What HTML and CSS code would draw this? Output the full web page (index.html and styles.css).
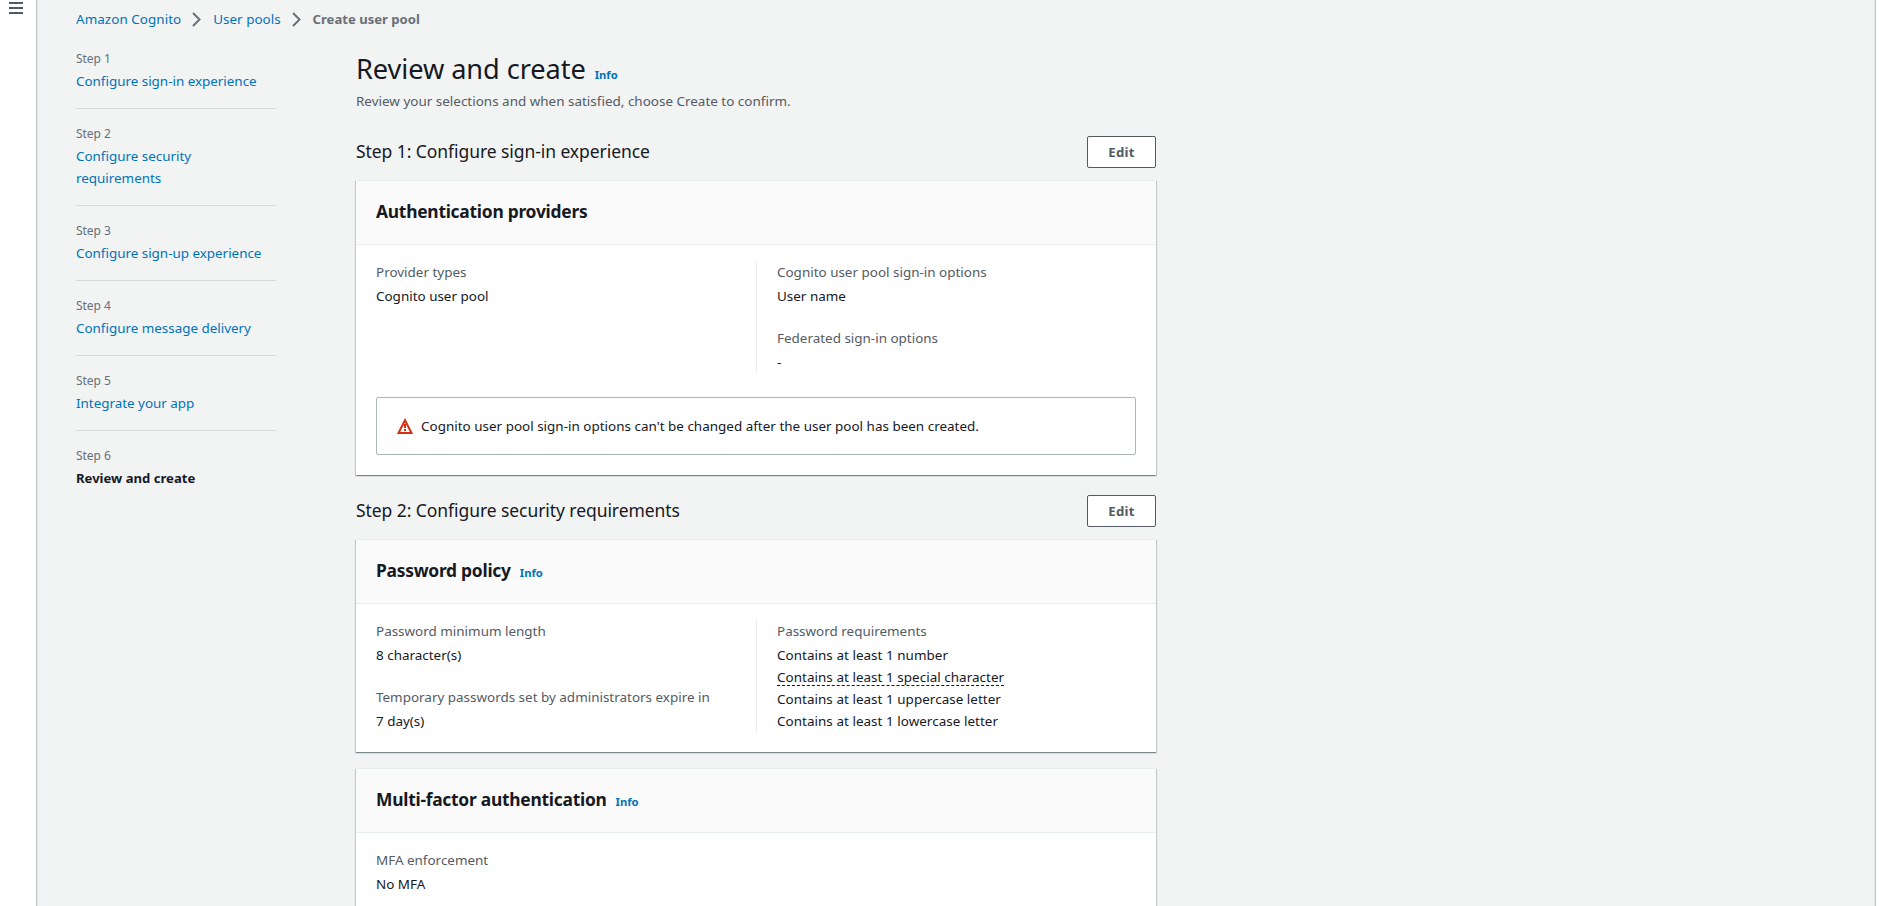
FILE: index.html
```html
<!DOCTYPE html>
<html lang="en">
<head>
<meta charset="utf-8">
<title>Create user pool</title>
<link rel="stylesheet" href="styles.css">
</head>
<body>
<div class="app">
  <aside class="rail">
    <svg class="menu" width="14" height="12" viewBox="0 0 14 12" fill="none" stroke="#545b64" stroke-width="2"><path d="M0 1h14M0 6h14M0 11h14"/></svg>
  </aside>
  <main class="main">
    <nav class="crumbs">
      <a class="crumb">Amazon Cognito</a>
      <svg class="chevron" width="9" height="15" viewBox="0 0 9 15" fill="none" stroke="#687078" stroke-width="2"><path d="M1 1l6.5 6.5L1 14"/></svg>
      <a class="crumb crumb-short">User pools</a>
      <svg class="chevron" width="9" height="15" viewBox="0 0 9 15" fill="none" stroke="#687078" stroke-width="2"><path d="M1 1l6.5 6.5L1 14"/></svg>
      <span class="crumb-current">Create user pool</span>
    </nav>
    <div class="columns">
      <ol class="steps">
        <li class="step"><small>Step 1</small><a>Configure sign-in experience</a></li>
        <li class="step"><small>Step 2</small><a>Configure security requirements</a></li>
        <li class="step"><small>Step 3</small><a>Configure sign-up experience</a></li>
        <li class="step"><small>Step 4</small><a>Configure message delivery</a></li>
        <li class="step"><small>Step 5</small><a>Integrate your app</a></li>
        <li class="step"><small>Step 6</small><b>Review and create</b></li>
      </ol>
      <div class="content">
        <h1>Review and create<a class="info">Info</a></h1>
        <p class="description">Review your selections and when satisfied, choose Create to confirm.</p>

        <div class="section-head"><h2>Step 1: Configure sign-in experience</h2><button class="edit">Edit</button></div>
        <section class="card">
          <h3>Authentication providers</h3>
          <div class="card-body">
            <div class="pair">
              <dl><dt>Provider types</dt><dd>Cognito user pool</dd></dl>
              <dl><dt>Cognito user pool sign-in options</dt><dd>User name</dd><dt>Federated sign-in options</dt><dd>-</dd></dl>
            </div>
            <div class="alert">
              <svg class="alert-icon" width="16" height="16" viewBox="0 0 16 16" fill="none" stroke="#d13212" stroke-width="2"><path d="M8 2.2L1.5 15h13z"/><path d="M8 6v4M8 11v2"/></svg>
              <span>Cognito user pool sign-in options can't be changed after the user pool has been created.</span>
            </div>
          </div>
        </section>

        <div class="section-head"><h2>Step 2: Configure security requirements</h2><button class="edit">Edit</button></div>
        <section class="card">
          <h3>Password policy<a class="info">Info</a></h3>
          <div class="card-body">
            <div class="pair">
              <dl><dt>Password minimum length</dt><dd>8 character(s)</dd><dt>Temporary passwords set by administrators expire in</dt><dd>7 day(s)</dd></dl>
              <dl class="rules"><dt>Password requirements</dt><dd>Contains at least 1 number</dd><dd><span class="hint">Contains at least 1 special character</span></dd><dd>Contains at least 1 uppercase letter</dd><dd>Contains at least 1 lowercase letter</dd></dl>
            </div>
          </div>
        </section>
        <section class="card">
          <h3>Multi-factor authentication<a class="info">Info</a></h3>
          <div class="card-body">
            <dl><dt>MFA enforcement</dt><dd>No MFA</dd></dl>
          </div>
        </section>
      </div>
    </div>
  </main>
</div>
</body>
</html>
```
FILE: styles.css
```css
* { box-sizing: border-box; }

body {
  margin: 0;
  background: #fff;
  color: #16191f;
  font: 13.45px/22px "Noto Sans", sans-serif;
}

h1, h2, h3, p, dl, dd, ol { margin: 0; padding: 0; }
a { color: #0073bb; text-decoration: none; }

.app { display: flex; height: 906px; padding-right: 3px; overflow: hidden; }
.rail { width: 36px; flex: none; padding: 2px 0 0 9px; background: #fff; }
.menu { display: block; }
.main {
  flex: 1;
  padding: 8px 0 0 39px;
  background: #f2f3f3;
  border-left: 1px solid #bfc5c7;
  border-right: 1px solid #bfc5c7;
  box-shadow: inset 1px 0 0 #e3e6e7, inset -1px 0 0 #e3e6e7;
}

.crumbs { display: flex; align-items: center; height: 22px; }
.chevron { margin: 0 12px 0 11px; }
.crumb { letter-spacing: 0.05px; }
.crumb-short { letter-spacing: 0; }
.crumb-current { color: #687078; font-size: 13.1px; font-weight: 700; }

.columns { display: flex; gap: 80px; padding-top: 17px; }
.steps { width: 200px; list-style: none; }
.step { padding: 13px 0 16px; border-top: 1px solid #d5dbdb; }
.step:first-child { padding-top: 0; border-top: 0; }
.step small { display: block; padding-top: 1px; color: #687078; font-size: 12px; letter-spacing: -0.05px; }
.step a, .step b { display: block; }
.step a { letter-spacing: -0.02px; }
.step:nth-child(2) a { width: 150px; }
.step b { font-size: 13.1px; }

.content { width: 800px; padding-top: 4px; }
h1 { font-size: 27.2px; line-height: 36px; font-weight: 400; letter-spacing: -0.08px; }
.info { margin-left: 9px; font-size: 11.2px; line-height: 16px; font-weight: 700; letter-spacing: 0; }
.description { margin: 3px 0 24px; color: #545b64; letter-spacing: 0.01px; }

.section-head { display: flex; justify-content: space-between; align-items: center; margin-bottom: 12px; }
h2 { padding-bottom: 2px; font-size: 17.5px; line-height: 22px; font-weight: 400; letter-spacing: -0.07px; }
.edit {
  width: 69px;
  height: 32px;
  padding: 0;
  background: #fff;
  border: 1px solid #545b64;
  border-radius: 2px;
  color: #545b64;
  font: 700 13.2px/22px "Noto Sans", sans-serif;
  letter-spacing: 0.25px;
}

.card {
  background: #fff;
  border-top: 1px solid #eaeded;
  box-shadow: 0 1px 1px 0 rgba(0, 28, 36, .3), 1px 1px 1px 0 rgba(0, 28, 36, .15), -1px 1px 1px 0 rgba(0, 28, 36, .15);
}
.card + .section-head { margin-top: 20px; }
.card + .card { margin-top: 16px; }
h3 {
  height: 64px;
  padding: 19px 20px 0;
  background: #fafafa;
  border-bottom: 1px solid #eaeded;
  font-size: 17.4px;
  line-height: 22px;
  font-weight: 700;
  letter-spacing: -0.25px;
}
.card-body { padding: 16px 20px 20px; }
.pair { display: grid; grid-template-columns: 380px 1fr; }
.pair dl + dl { padding-left: 20px; border-left: 1px solid #eaeded; }
dt { margin-bottom: 2px; color: #545b64; }
dd + dt { margin-top: 20px; }
dd { height: 22px; }
.rules dd { letter-spacing: 0.04px; }
.hint { display: inline-block; height: 20px; vertical-align: top; border-bottom: 1px dashed #16191f; }

.alert {
  display: flex;
  align-items: center;
  gap: 8px;
  height: 58px;
  margin-top: 24px;
  padding: 0 20px;
  border: 1px solid #aab7b8;
  border-radius: 2px;
  letter-spacing: 0.01px;
}
.alert-icon { flex: none; }
```
